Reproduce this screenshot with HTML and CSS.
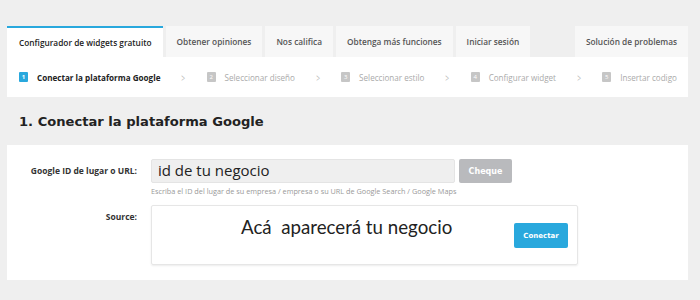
FILE: index.html
```html
<!DOCTYPE html>
<html lang="es">
<head>
    <meta charset="UTF-8">
    <meta name="viewport" content="width=device-width, initial-scale=1.0">
    <title>Configurador de widgets</title>
    <link rel="stylesheet" href="styles.css">
</head>
<body>
    <div class="wrap">
        <!-- Pestañas -->
        <div class="tabs">
            <div class="tab active">Configurador de widgets gratuito</div>
            <div class="tab">Obtener opiniones</div>
            <div class="tab">Nos califica</div>
            <div class="tab">Obtenga más funciones</div>
            <div class="tab">Iniciar sesión</div>
            <div class="tab last">Solución de problemas</div>
        </div>

        <!-- Pasos -->
        <div class="steps">
            <div class="step current"><span class="num">1</span>Conectar la plataforma Google</div>
            <span class="chev">&gt;</span>
            <div class="step"><span class="num">2</span>Seleccionar diseño</div>
            <span class="chev">&gt;</span>
            <div class="step"><span class="num">3</span>Seleccionar estilo</div>
            <span class="chev">&gt;</span>
            <div class="step"><span class="num">4</span>Configurar widget</div>
            <span class="chev">&gt;</span>
            <div class="step"><span class="num">5</span>Insertar codigo</div>
        </div>

        <h1>1. Conectar la plataforma Google</h1>

        <div class="card">
            <div class="row">
                <label class="label">Google ID de lugar o URL:</label>
                <div class="field">
                    <div class="input-line">
                        <div class="input">id de tu negocio</div>
                        <button class="btn-check">Cheque</button>
                    </div>
                    <div class="help">Escriba el ID del lugar de su empresa / empresa o su URL de Google Search / Google Maps</div>
                </div>
            </div>
            <div class="row">
                <label class="label source-label">Source:</label>
                <div class="source">
                    <div class="source-text">Acá&nbsp; aparecerá tu negocio</div>
                    <button class="btn-connect">Conectar</button>
                </div>
            </div>
        </div>
    </div>
</body>
</html>
```

FILE: styles.css
```css
body {
    margin: 0;
    background: #efefef;
    font-family: "Open Sans", Arial, sans-serif;
    color: #333;
}
.wrap { width: 681px; padding: 26px 0 0 7px; }

/* pestañas */
.tabs { display: flex; gap: 3px; height: 31px; }
.tab {
    background: #f7f7f7;
    color: #555;
    font-size: 8.3px;
    font-weight: 600;
    line-height: 31px;
    padding: 0 11px;
    white-space: nowrap;
}
.tab.active { background: #fff; color: #222; border-top: 2px solid #29a8dd; line-height: 29px; padding: 0 11px 0 12px; }
.tab.last { margin-left: auto; }

/* pasos */
.steps {
    display: flex;
    align-items: center;
    justify-content: space-between;
    background: #fff;
    height: 40px;
    padding: 0 11px 0 12px;
    font-size: 8.1px;
    color: #aaa;
}
.step { display: flex; align-items: center; white-space: nowrap; }
.step.current { color: #222; font-weight: 700; }
.num {
    display: inline-block;
    width: 9px;
    height: 10px;
    line-height: 10px;
    border-radius: 1px;
    background: #c6c6c6;
    color: #fff;
    font-size: 6px;
    text-align: center;
    margin-right: 9px;
}
.current .num { background: #29a8dd; }
.chev { color: #bbb; font-size: 11px; transform: scaleX(0.6); }

h1 {
    font-family: "DejaVu Sans", sans-serif;
    font-size: 13.1px;
    font-weight: 700;
    color: #222;
    margin: 0;
    padding: 17px 12px 15px;
    line-height: 16px;
}

/* tarjeta */
.card { background: #fff; padding: 14px 0 15px; }
.row { display: flex; gap: 14px; }
.row + .row { margin-top: 9px; }
.label {
    width: 130px;
    text-align: right;
    font-size: 8.5px;
    font-weight: 700;
    color: #333;
    line-height: 24px;
}
.source-label { line-height: 14px; padding-top: 5px; }
.input-line { display: flex; gap: 4px; }
.input {
    width: 296px;
    height: 22px;
    background: #efefef;
    border: 1px solid #e4e4e4;
    border-radius: 2px;
    font-size: 15px;
    color: #222;
    line-height: 21px;
    padding-left: 6px;
}
.btn-check {
    width: 53px;
    height: 24px;
    border: none;
    border-radius: 2px;
    background: #b9babd;
    color: #fff;
    font-family: "DejaVu Sans", sans-serif;
    font-weight: 700;
    font-size: 8px;
}
.help { font-size: 7.3px; color: #999; margin-top: 3px; }

.source {
    width: 425px;
    height: 58px;
    border: 1px solid #e6e6e6;
    border-radius: 2px;
    box-shadow: 0 1px 2px rgba(0, 0, 0, 0.08);
    display: flex;
    align-items: flex-start;
}
.source-text {
    flex: 1;
    font-family: "Lato", sans-serif;
    font-size: 18.7px;
    color: #222;
    padding: 10px 0 0 89px;
}
.btn-connect {
    width: 54px;
    height: 25px;
    margin: 17px 9px 0 0;
    border: none;
    border-radius: 2px;
    background: #29a8dd;
    color: #fff;
    font-family: "DejaVu Sans", sans-serif;
    font-weight: 700;
    font-size: 7px;
}
```
